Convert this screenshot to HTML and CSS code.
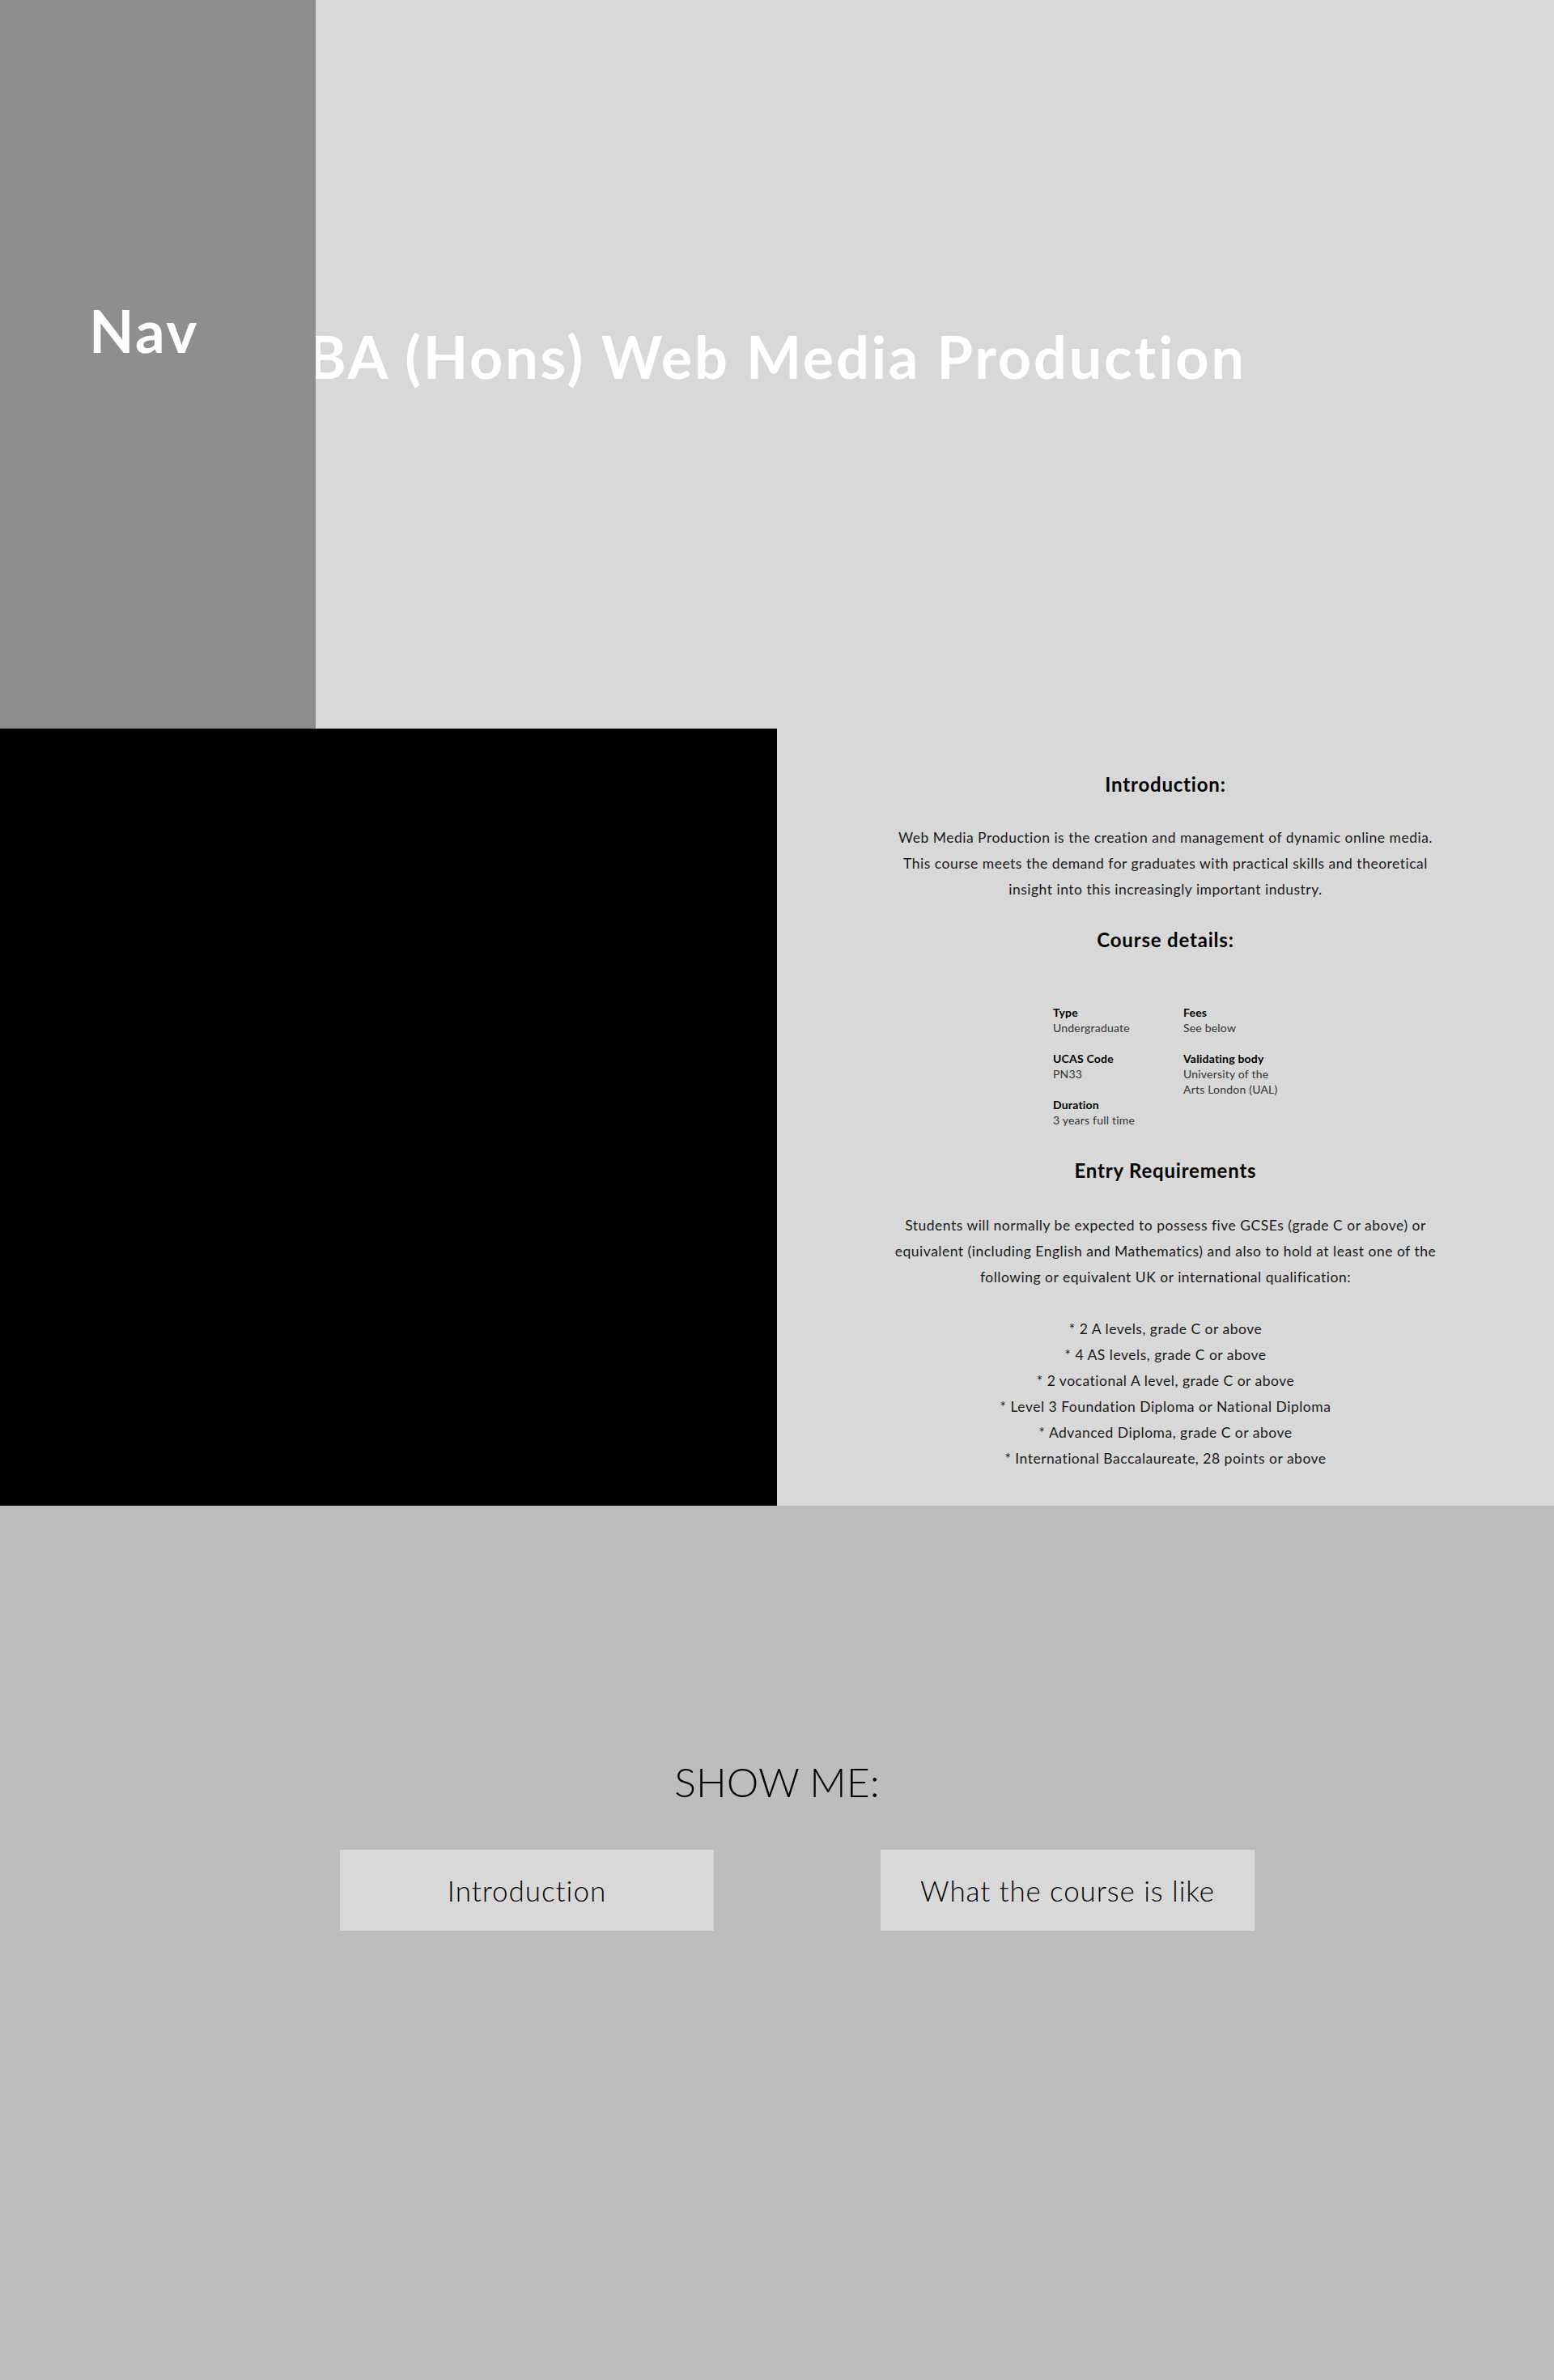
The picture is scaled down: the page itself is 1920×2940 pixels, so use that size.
FILE: index.html
```html
<!DOCTYPE html>
<html lang="en">
<head>
<meta charset="utf-8">
<title>BA (Hons) Web Media Production</title>
<link rel="stylesheet" href="styles.css">
</head>
<body>
<header class="hero">
  <h1 class="hero-title">BA (Hons) Web Media Production</h1>
  <nav class="side-nav"><span class="side-nav-label">Nav</span></nav>
</header>

<section class="course">
  <div class="course-media"></div>
  <div class="course-info">
    <h2 class="info-heading">Introduction:</h2>
    <p class="info-text">Web Media Production is the creation and management of dynamic online media.<br>This course meets the demand for graduates with practical skills and theoretical<br>insight into this increasingly important industry.</p>

    <h2 class="info-heading details-heading">Course details:</h2>
    <div class="details">
      <div class="details-col details-col-left">
        <dl class="detail"><dt>Type</dt><dd>Undergraduate</dd></dl>
        <dl class="detail"><dt>UCAS Code</dt><dd>PN33</dd></dl>
        <dl class="detail"><dt>Duration</dt><dd>3 years full time</dd></dl>
      </div>
      <div class="details-col">
        <dl class="detail"><dt>Fees</dt><dd>See below</dd></dl>
        <dl class="detail"><dt>Validating body</dt><dd>University of the<br>Arts London (UAL)</dd></dl>
      </div>
    </div>

    <h2 class="info-heading entry-heading">Entry Requirements</h2>
    <p class="info-text entry-text">Students will normally be expected to possess five GCSEs (grade C or above) or<br>equivalent (including English and Mathematics) and also to hold at least one of the<br>following or equivalent UK or international qualification:<br><br>* 2 A levels, grade C or above<br>* 4 AS levels, grade C or above<br>* 2 vocational A level, grade C or above<br>* Level 3 Foundation Diploma or National Diploma<br>* Advanced Diploma, grade C or above<br>* International Baccalaureate, 28 points or above</p>
  </div>
</section>

<section class="show-me">
  <h2 class="show-me-title">SHOW ME:</h2>
  <div class="choices">
    <a class="choice choice-intro" href="#">Introduction</a>
    <a class="choice choice-like" href="#">What the course is like</a>
  </div>
</section>
</body>
</html>
```

FILE: styles.css
```css
* { box-sizing: border-box; }

body {
  margin: 0;
  font-family: Lato, "Noto Sans", "Liberation Sans", sans-serif;
  color: #111;
  background: #bdbdbd;
}

/* ---------- hero ---------- */
.hero {
  position: relative;
  height: 900px;
  background: #d8d8d8;
  padding-top: 404px;
}

.hero-title {
  margin: 0;
  text-align: center;
  color: #fff;
  font-size: 72px;
  line-height: 72px;
  font-weight: 700;
  letter-spacing: 2.8px;
  white-space: nowrap;
}

.side-nav {
  position: absolute;
  left: 0;
  top: 0;
  width: 390px;
  height: 900px;
  background: #8e8e8e;
  padding: 372px 0 0 110px;
}

.side-nav-label {
  display: block;
  color: #fff;
  font-size: 72px;
  line-height: 72px;
  font-weight: 700;
  letter-spacing: 2.5px;
}

/* ---------- course ---------- */
.course {
  display: grid;
  grid-template-columns: 960px 960px;
  height: 960px;
  background: #d8d8d8;
}

.course-media {
  background: #000;
}

.course-info {
  padding-top: 53px;
  text-align: center;
}

.info-heading {
  margin: 0;
  font-size: 24px;
  line-height: 32px;
  font-weight: 700;
  letter-spacing: 0.8px;
  color: #000;
}

.info-text {
  margin: 34px 0 0;
  font-size: 17.5px;
  line-height: 32px;
  letter-spacing: 0.5px;
  color: #1a1a1a;
}

.details-heading {
  margin-top: 30px;
}

.details {
  display: grid;
  grid-template-columns: 161px 117px;
  width: 278px;
  margin: 64px auto 0;
  text-align: left;
}

.detail {
  margin: 0 0 19px;
  font-size: 14px;
  line-height: 19px;
  letter-spacing: 0.2px;
}

.detail dt {
  font-weight: 700;
  color: #000;
}

.detail dd {
  margin: 0;
  color: #333;
  white-space: nowrap;
}

.entry-heading {
  margin-top: 18px;
}

.entry-text {
  margin-top: 36px;
}

/* ---------- show me ---------- */
.show-me {
  height: 1080px;
  background: #bdbdbd;
  padding-top: 309px;
  text-align: center;
}

.show-me-title {
  margin: 0;
  font-size: 50px;
  line-height: 64px;
  font-weight: 300;
  color: #000;
}

.choices {
  display: flex;
  gap: 206px;
  justify-content: center;
  margin-top: 52px;
  padding-left: 50px;
}

.choice {
  display: flex;
  align-items: center;
  justify-content: center;
  width: 462px;
  height: 100px;
  background: #d8d8d8;
  color: #000;
  text-decoration: none;
  font-size: 35px;
  font-weight: 300;
}

.choice-intro {
  letter-spacing: 1px;
}

.choice-like {
  letter-spacing: 0.9px;
}
```
